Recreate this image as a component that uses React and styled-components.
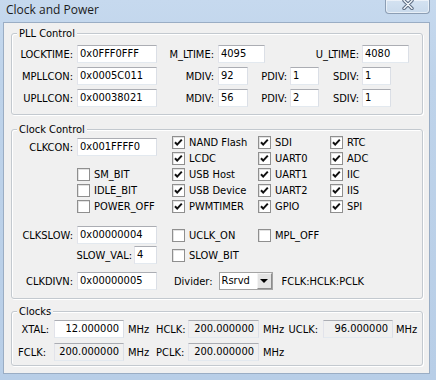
import React from "react";
import styled, { createGlobalStyle } from "styled-components";

const GlobalStyle = createGlobalStyle`
  * { box-sizing: border-box; }
  html, body { margin: 0; padding: 0; background: #fff; }
  body {
    font-family: "DejaVu Sans Condensed", "DejaVu Sans", sans-serif;
    font-size: 11px;
    color: #000;
  }
`;

const Window = styled.div`
  width: 436px;
  height: 380px;
  display: flex;
  flex-direction: column;
  background: linear-gradient(#c6d9ee, #bed3ea 80px, #b8cee7);
  overflow: hidden;
`;

const TitleBar = styled.div`
  height: 22px;
  flex: none;
  display: flex;
  align-items: flex-start;
  padding-left: 6px;
`;

const Title = styled.span`
  font-family: "Open Sans", "Noto Sans", sans-serif;
  font-size: 12px;
  line-height: 20px;
  color: #1b1b1b;
`;

const CloseButton = styled.div`
  margin-left: auto;
  margin-right: 6px;
  width: 45px;
  height: 14px;
  border: 1px solid #8c9eb4;
  border-top: none;
  border-radius: 0 0 4px 4px;
  background: linear-gradient(#d4e2f1, #c9daec);
  box-shadow: inset 0 0 0 1px rgba(255, 255, 255, 0.55);
  display: flex;
  align-items: flex-start;
  justify-content: center;
`;

const Client = styled.div`
  flex: 1;
  margin: 0 6px 6px 3px;
  background: #f0f0f0;
  border: 1px solid #9aadc4;
  padding: 10px 6px 0 7px;
`;

const Group = styled.div`
  margin-top: ${(p) => p.$mt || 0}px;
  padding-bottom: ${(p) => p.$pb || 0}px;
  border: 1px solid #c3c9cf;
  border-radius: 3px;
  box-shadow: inset 1px 1px 0 #fff, 1px 1px 0 #fff;
`;

const GroupTitle = styled.div`
  width: fit-content;
  margin: -7px 0 0 5px;
  padding: 0 2px;
  line-height: 13px;
  background: #f0f0f0;
`;

const PllBody = styled.div`
  display: flex;
  flex-direction: column;
  gap: 4px;
  padding-top: 5px;
`;

const Row = styled.div`
  display: flex;
  align-items: center;
  height: 18px;
  margin-top: ${(p) => p.$mt || 0}px;
`;

const Label = styled.div`
  flex: none;
  width: ${(p) => p.$w}px;
  padding-right: ${(p) => (p.$pr ?? 4)}px;
  text-align: right;
  white-space: nowrap;
`;

const Field = styled.div`
  flex: none;
  width: ${(p) => p.$w}px;
  height: 18px;
  border: 1px solid;
  border-color: #abadb3 #dbdfe6 #e3e9ef #e2e3ea;
  background: ${(p) => (p.$ro ? "#f0f0f0" : "#fff")};
  padding: ${(p) => (p.$right ? "0 4px 0 0" : "0 0 0 2px")};
  line-height: 16px;
  text-align: ${(p) => (p.$right ? "right" : "left")};
  white-space: nowrap;
  overflow: hidden;
`;

const Unit = styled.div`
  flex: none;
  width: ${(p) => (p.$w ? `${p.$w}px` : "auto")};
  padding-left: ${(p) => p.$pl || 4}px;
  white-space: nowrap;
`;

const CheckGrid = styled.div`
  display: grid;
  grid-template-columns: 65px 95px 86px 72px 1fr;
  grid-auto-rows: 16px;
  align-items: center;
  margin-top: -2px;
`;

const ControlRow = styled.div`
  display: grid;
  grid-template-columns: 65px 95px 86px 72px 1fr;
  align-items: center;
  height: 18px;
  margin-top: ${(p) => p.$mt || 0}px;
`;

const Cell = styled.div`
  grid-column: ${(p) => p.$col};
  grid-row: ${(p) => p.$row || "auto"};
  align-self: ${(p) => p.$align || "center"};
  margin-top: ${(p) => p.$mt || 0}px;
  display: flex;
  align-items: center;
  justify-content: ${(p) => (p.$end ? "flex-end" : "flex-start")};
  padding-right: ${(p) => p.$pr || 0}px;
  padding-left: ${(p) => p.$pl || 0}px;
  white-space: nowrap;
`;

const CheckItem = styled.div`
  grid-column: ${(p) => p.$col};
  grid-row: ${(p) => p.$row || "auto"};
  display: flex;
  align-items: center;
  gap: 4px;
  white-space: nowrap;
`;

const Box = styled.span`
  flex: none;
  width: 13px;
  height: 13px;
  border: 1px solid #8f8f8f;
  background: #fff;
  box-shadow: inset 1px 1px 0 #e2e2e2;
  display: flex;
  align-items: center;
  justify-content: center;
`;

const Combo = styled.div`
  flex: none;
  width: 54px;
  height: 18px;
  display: flex;
  border: 1px solid #a4a4a4;
  background: #fff;
`;

const ComboText = styled.div`
  flex: 1;
  padding-left: 2px;
  line-height: 16px;
`;

const ComboButton = styled.div`
  width: 15px;
  border: 1px solid;
  border-color: #f4f4f4 #8c8c8c #8c8c8c #f4f4f4;
  background: #e4e4e4;
  display: flex;
  align-items: center;
  justify-content: center;
`;

const Arrow = styled.span`
  width: 0;
  height: 0;
  border-left: 4px solid transparent;
  border-right: 4px solid transparent;
  border-top: 4px solid #000;
`;

const ClocksBody = styled.div`
  display: flex;
  flex-direction: column;
  gap: 5px;
  padding-top: 2px;
`;

const Check = ({ col, row, checked, children }) => (
  <CheckItem $col={col} $row={row}>
    <Box>
      {checked && (
        <svg width="9" height="9" viewBox="0 0 9 9">
          <polyline points="1,4.2 3.2,6.6 7.8,1.6" fill="none" stroke="#111" strokeWidth="2" />
        </svg>
      )}
    </Box>
    <span>{children}</span>
  </CheckItem>
);

const checkRows = [
  ["NAND Flash", "SDI", "RTC"],
  ["LCDC", "UART0", "ADC"],
  ["USB Host", "UART1", "IIC"],
  ["USB Device", "UART2", "IIS"],
  ["PWMTIMER", "GPIO", "SPI"],
];

const leftChecks = ["SM_BIT", "IDLE_BIT", "POWER_OFF"];

export default function App() {
  return (
    <>
      <GlobalStyle />
      <Window>
        <TitleBar>
          <Title>Clock and Power</Title>
          <CloseButton>
            <svg width="14" height="10" viewBox="0 0 14 10">
              <path d="M3 0.5 L11 8.5 M11 0.5 L3 8.5" stroke="#5a6a80" strokeWidth="3.4" strokeLinecap="round" />
              <path d="M3 0.5 L11 8.5 M11 0.5 L3 8.5" stroke="#f4f8fc" strokeWidth="1.4" strokeLinecap="round" />
            </svg>
          </CloseButton>
        </TitleBar>
        <Client>
          <Group $pb={7}>
            <GroupTitle>PLL Control</GroupTitle>
            <PllBody>
              <Row>
                <Label $w={65}>LOCKTIME:</Label>
                <Field $w={80}>0x0FFF0FFF</Field>
                <Label $w={61}>M_LTIME:</Label>
                <Field $w={47}>4095</Field>
                <Label $w={97} $pr={3}>U_LTIME:</Label>
                <Field $w={47}>4080</Field>
              </Row>
              <Row>
                <Label $w={65}>MPLLCON:</Label>
                <Field $w={80}>0x0005C011</Field>
                <Label $w={61}>MDIV:</Label>
                <Field $w={30}>92</Field>
                <Label $w={42} $pr={3}>PDIV:</Label>
                <Field $w={29}>1</Field>
                <Label $w={43} $pr={3}>SDIV:</Label>
                <Field $w={29}>1</Field>
              </Row>
              <Row>
                <Label $w={65}>UPLLCON:</Label>
                <Field $w={80}>0x00038021</Field>
                <Label $w={61}>MDIV:</Label>
                <Field $w={30}>56</Field>
                <Label $w={42} $pr={3}>PDIV:</Label>
                <Field $w={29}>2</Field>
                <Label $w={43} $pr={3}>SDIV:</Label>
                <Field $w={29}>1</Field>
              </Row>
            </PllBody>
          </Group>

          <Group $mt={14} $pb={8}>
            <GroupTitle>Clock Control</GroupTitle>
            <CheckGrid>
              <Cell $col="1 / 3" $row="1 / 3" $align="start" $mt={4}>
                <Label $w={65}>CLKCON:</Label>
                <Field $w={80}>0x001FFFF0</Field>
              </Cell>
              {checkRows.map((r, i) =>
                r.map((name, j) => (
                  <Check key={name} col={j + 3} row={i + 1} checked>
                    {name}
                  </Check>
                ))
              )}
              {leftChecks.map((name, i) => (
                <Check key={name} col={2} row={i + 3}>
                  {name}
                </Check>
              ))}
            </CheckGrid>

            <ControlRow $mt={12}>
              <Label $w={65}>CLKSLOW:</Label>
              <Field $w={80}>0x00000004</Field>
              <Check col={3}>UCLK_ON</Check>
              <Check col={4}>MPL_OFF</Check>
            </ControlRow>

            <ControlRow $mt={2}>
              <Cell $col="1 / 3" $end $pr={15}>
                <Label $w={70} $pr={2}>SLOW_VAL:</Label>
                <Field $w={23}>4</Field>
              </Cell>
              <Check col={3}>SLOW_BIT</Check>
            </ControlRow>

            <ControlRow $mt={8}>
              <Label $w={65}>CLKDIVN:</Label>
              <Field $w={80}>0x00000005</Field>
              <Cell $col="3 / -1" $pl={2}>
                <span>Divider:</span>
                <Unit $pl={6}>
                  <Combo>
                    <ComboText>Rsrvd</ComboText>
                    <ComboButton>
                      <Arrow />
                    </ComboButton>
                  </Combo>
                </Unit>
                <Unit $pl={9}>FCLK:HCLK:PCLK</Unit>
              </Cell>
            </ControlRow>
          </Group>

          <Group $mt={12} $pb={4}>
            <GroupTitle>Clocks</GroupTitle>
            <ClocksBody>
              <Row>
                <Label $w={42} $pr={5}>XTAL:</Label>
                <Field $w={70} $right>12.000000</Field>
                <Unit $w={32}>MHz</Unit>
                <Label $w={32} $pr={6}>HCLK:</Label>
                <Field $w={71} $right $ro>200.000000</Field>
                <Unit $w={27}>MHz</Unit>
                <Label $w={37} $pr={5}>UCLK:</Label>
                <Field $w={70} $right $ro>96.000000</Field>
                <Unit $pl={3}>MHz</Unit>
              </Row>
              <Row>
                <Label $w={42} $pr={8}>FCLK:</Label>
                <Field $w={70} $right $ro>200.000000</Field>
                <Unit $w={32}>MHz</Unit>
                <Label $w={32} $pr={6}>PCLK:</Label>
                <Field $w={71} $right $ro>200.000000</Field>
                <Unit $w={27}>MHz</Unit>
              </Row>
            </ClocksBody>
          </Group>
        </Client>
      </Window>
    </>
  );
}
